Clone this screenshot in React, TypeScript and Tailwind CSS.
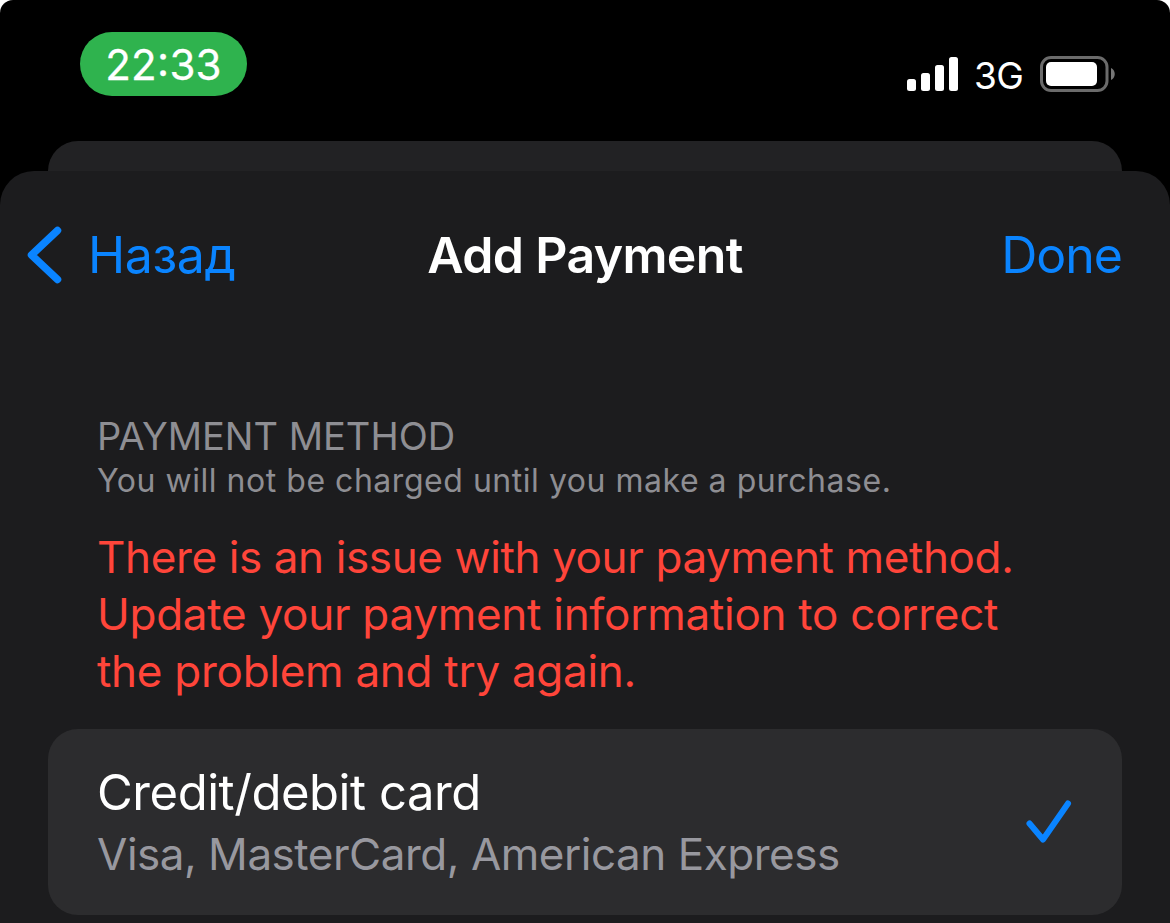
const BackIcon = () => (
  <svg className="h-[58px] w-[36px]" viewBox="0 0 36 58" fill="none">
    <path d="M31.5 4.5L5.5 29L31.5 53.5" stroke="#0a84ff" strokeWidth="7.500" strokeLinecap="round" strokeLinejoin="round" />
  </svg>
);

const CheckIcon = () => (
  <svg className="h-[44px] w-[46px]" viewBox="0 0 46 44" fill="none">
    <path d="M3.5 23.500L17 39.500L42 3.500" stroke="#0a84ff" strokeWidth="6" strokeLinecap="round" strokeLinejoin="round" />
  </svg>
);

const SignalIcon = () => (
  <svg className="h-[35px] w-[52px]" viewBox="0 0 52 35" fill="white">
    <rect x="0" y="22" width="9" height="12" rx="2.500" />
    <rect x="14" y="16" width="9" height="18" rx="2.500" />
    <rect x="28" y="8" width="9" height="26" rx="2.500" />
    <rect x="42" y="0" width="9" height="34" rx="2.500" />
  </svg>
);

const BatteryIcon = () => (
  <svg className="h-[36px] w-[75px] shrink-0" viewBox="0 0 75 36" fill="none">
    <rect x="1.5" y="1.5" width="65.500" height="33" rx="9.500" stroke="#6b6b6b" strokeWidth="3" />
    <rect x="6" y="6" width="51" height="24" rx="5" fill="white" />
    <path d="M71 12C76 14 76 22 71 24Z" fill="#767676" />
  </svg>
);

export default function App() {
  return (
    <div className="h-[923px] w-[1170px] overflow-hidden bg-white font-['Inter','Liberation_Sans',sans-serif] whitespace-nowrap">
      <div className="h-full rounded-t-[13px] bg-black">
        <header className="flex h-[141px] items-start justify-between pr-[55px] pl-20">
          <div className="mt-8 flex h-16 w-[167px] items-center justify-center rounded-full bg-[#2fb34e] text-[42px] tracking-[0.3px] text-white [-webkit-text-stroke:0.3px_white]">
            22<span className="-mt-2">:</span>33
          </div>
          <div className="mt-14 flex h-9 items-center text-white">
            <SignalIcon />
            <span className="ml-[15px] w-[66px] pt-1 text-[37px] tracking-[-0.5px]">3G</span>
            <BatteryIcon />
          </div>
        </header>
        <div className="mx-12 h-[30px] rounded-t-[30px] bg-[#222224]" />
        <main className="h-[752px] rounded-t-[34px] bg-[#1c1c1e] px-12">
          <nav className="grid h-[168px] grid-cols-3 items-center text-[50px] text-[#0a84ff]">
            <button className="-ml-[22px] flex items-center gap-[26px]">
              <BackIcon />
              <span className="tracking-[-0.4px]">Назад</span>
            </button>
            <h1 className="text-center font-semibold tracking-[-0.65px] text-white">Add Payment</h1>
            <button className="text-right tracking-[-1px]">Done</button>
          </nav>
          <section className="h-[390px] pt-[73px] pl-[49px]">
            <h2 className="text-[38px] leading-[48px] text-[#8e8e93]">PAYMENT METHOD</h2>
            <p className="pt-px text-[32px] leading-[40px] tracking-[0.53px] text-[#8e8e93]">
              You will not be charged until you make a purchase.
            </p>
            <div className="mt-7 text-[44px] leading-[57px] text-[#ff453a]">
              <p className="tracking-[-0.38px]">There is an issue with your payment method.</p>
              <p className="tracking-[-0.27px]">Update your payment information to correct</p>
              <p className="tracking-[-0.28px]">the problem and try again.</p>
            </div>
          </section>
          <section className="flex h-[186px] items-center justify-between rounded-[30px] bg-[#2c2c2e] pr-[50px] pl-[49px]">
            <div>
              <h3 className="text-[49px] leading-[64px] tracking-[-0.45px] text-white">Credit/debit card</h3>
              <p className="text-[44px] leading-[58px] tracking-[-0.48px] text-[#98989f]">Visa, MasterCard, American Express</p>
            </div>
            <CheckIcon />
          </section>
        </main>
      </div>
    </div>
  );
}
